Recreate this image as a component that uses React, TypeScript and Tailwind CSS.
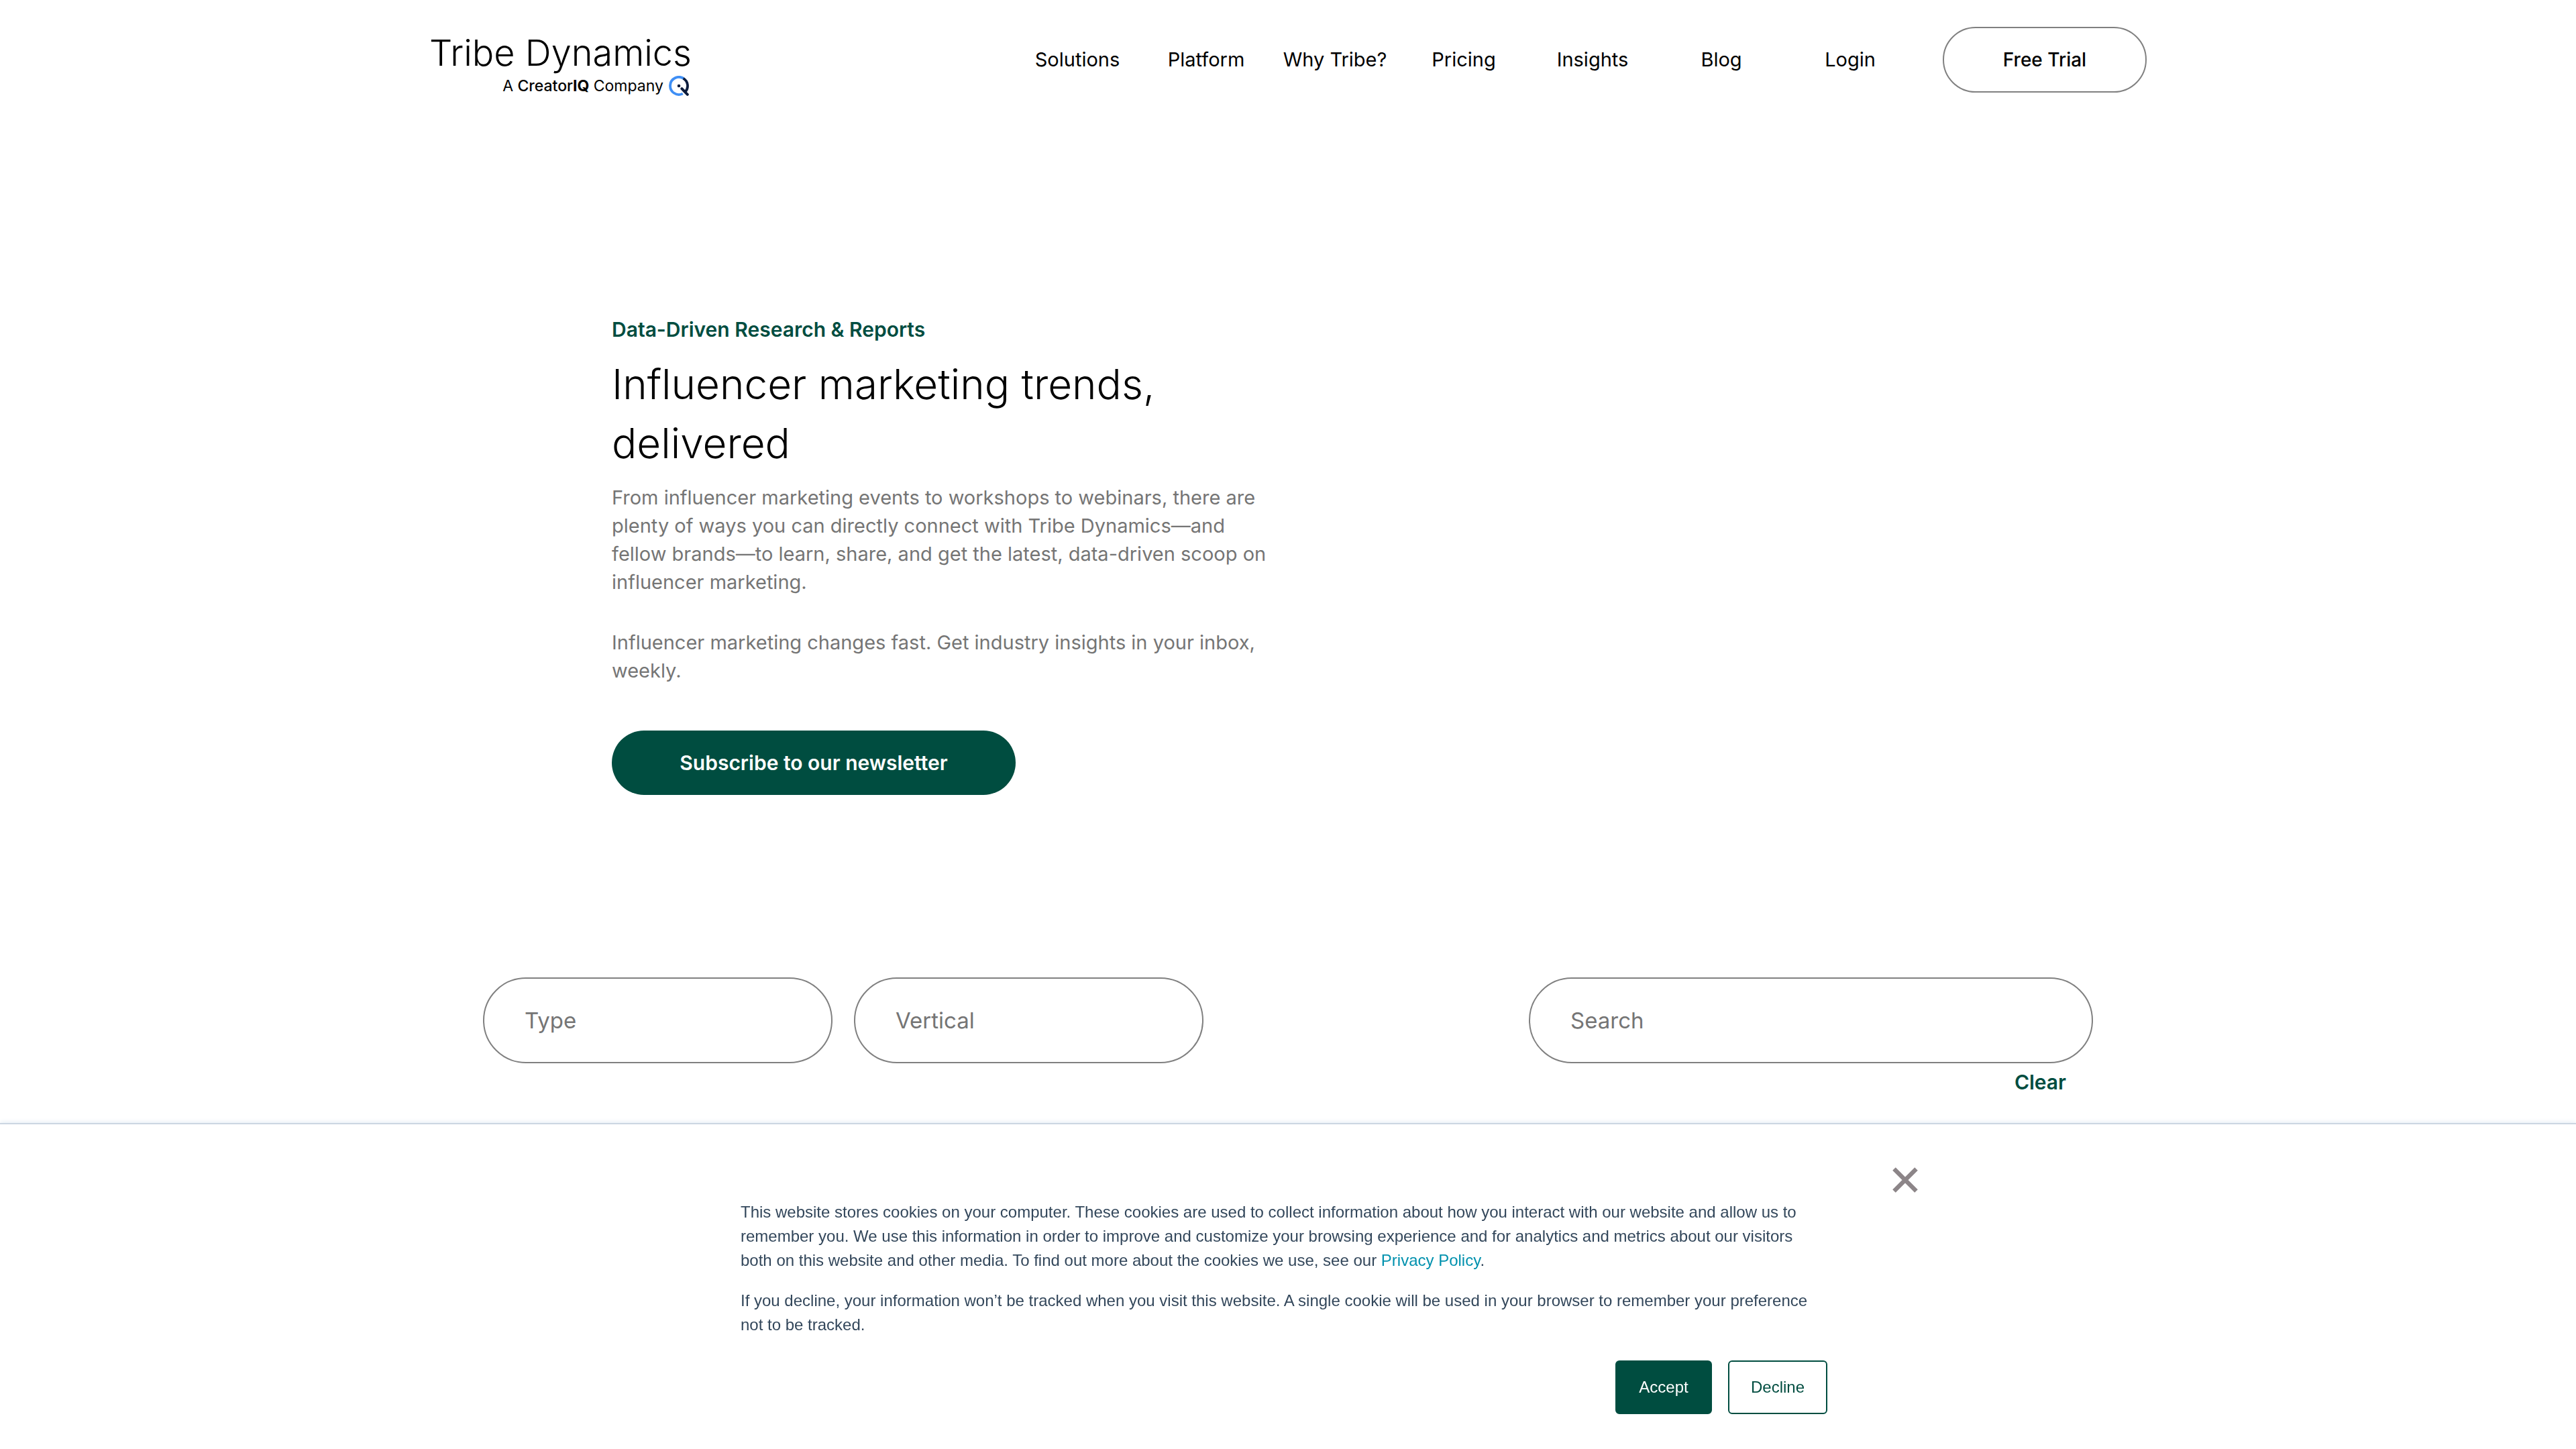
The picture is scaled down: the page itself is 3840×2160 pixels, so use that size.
const NAV_LINKS = ["Solutions", "Platform", "Why Tribe?", "Pricing", "Insights", "Blog", "Login"];

function Logo() {
  return (
    <a href="#" className="flex flex-col items-end pt-2 text-black" aria-label="Tribe Dynamics home">
      <span className="text-[54px] leading-[62px] font-light whitespace-nowrap">Tribe Dynamics</span>
      <span className="flex items-center gap-2 pr-1 text-[23px] leading-[36px] whitespace-nowrap">
        <span>
          A <span className="font-medium">Creator</span>
          <b className="font-bold">IQ</b> Company
        </span>
        <svg viewBox="0 0 30 30" className="size-[30px]" fill="none" aria-hidden="true">
          <path d="M22.2 4.1A13 13 0 1 0 20.8 26.6" stroke="#3f8ff5" strokeWidth="3.8" />
          <path d="M21.6 3.8A13 13 0 0 1 24.4 24" stroke="#0c1c3c" strokeWidth="3.8" />
          <path d="M19.4 19.2L27.8 27.8" stroke="#0c1c3c" strokeWidth="4" strokeLinecap="round" />
          <circle cx="15" cy="15" r="2.3" fill="#0c1c3c" />
        </svg>
      </span>
    </a>
  );
}

function Header() {
  return (
    <header className="mx-auto flex w-full max-w-[2560px] items-start justify-between pt-10">
      <Logo />
      <div className="flex items-center">
        <nav className="flex text-[29px] leading-[40px] text-black">
          {NAV_LINKS.map((label) => (
            <a key={label} href="#" className="w-48 text-center whitespace-nowrap">
              {label}
            </a>
          ))}
        </nav>
        <a
          href="#"
          className="ml-[42px] flex h-[98px] w-[304px] items-center justify-center rounded-full border-2 border-[#808080] text-[28px] leading-[40px] font-medium text-black"
        >
          Free Trial
        </a>
      </div>
    </header>
  );
}

function Hero() {
  return (
    <section className="mx-auto w-full max-w-[2016px] pt-[325px]">
      <div className="max-w-[1000px]">
        <p className="text-[30px] leading-[40px] font-semibold text-[#004d40]">Data-Driven Research &amp; Reports</p>
        <h1 className="mt-[18px] text-[62px] leading-[88px] font-[350] text-black">
          Influencer marketing trends,
          <br />
          delivered
        </h1>
        <div className="mt-4 flex flex-col gap-12 text-[29px] leading-[42px] text-[#757575]">
          <p>
            From influencer marketing events to workshops to webinars, there are
            <br />
            plenty of ways you can directly connect with Tribe Dynamics—and
            <br />
            fellow brands—to learn, share, and get the latest, data-driven scoop on
            <br />
            influencer marketing.
          </p>
          <p>
            Influencer marketing changes fast. Get industry insights in your inbox,
            <br />
            weekly.
          </p>
        </div>
        <button
          type="button"
          className="mt-[68px] h-24 w-[602px] rounded-full bg-[#004d40] text-[30px] leading-[40px] font-semibold text-white"
        >
          Subscribe to our newsletter
        </button>
      </div>
    </section>
  );
}

function Filters() {
  const field =
    "h-32 rounded-full border-2 border-[#808080] bg-white px-[60px] text-[33px] leading-[44px] text-black placeholder:text-[#757575]";
  return (
    <form className="mx-auto mt-[272px] flex w-full max-w-[2400px] items-start justify-between">
      <div className="flex gap-8">
        <input aria-label="Type" placeholder="Type" className={`${field} w-[521px]`} />
        <input aria-label="Vertical" placeholder="Vertical" className={`${field} w-[521px]`} />
      </div>
      <div className="flex w-[841px] flex-col items-end">
        <input aria-label="Search" placeholder="Search" className={`${field} w-full`} />
        <button type="reset" className="mt-2 mr-10 text-[30px] leading-[40px] font-semibold text-[#004d40]">
          Clear
        </button>
      </div>
    </form>
  );
}

function CookieBanner() {
  return (
    <section
      aria-label="Cookie notice"
      className="fixed inset-x-0 bottom-0 border-t-2 border-[#cbd6e2] bg-white pt-16 pb-[52px] font-['Liberation_Sans',Arial,sans-serif] text-2xl leading-[36px] text-[#33475b] shadow-[0_-2px_6px_#eaf0f6]"
    >
      <div className="mx-auto flex max-w-[1878px] justify-end">
        <button type="button" aria-label="Close">
          <svg viewBox="0 0 38 38" className="size-[38px]" fill="none" stroke="#8c8588" strokeWidth="6.4" aria-hidden="true">
            <path d="M2.5 2.5L35.5 35.5M35.5 2.5L2.5 35.5" />
          </svg>
        </button>
      </div>
      <div className="mx-auto mt-[11px] max-w-[1632px]">
        <p>
          This website stores cookies on your computer. These cookies are used to collect information about how you
          interact with our website and allow us to
          <br />
          remember you. We use this information in order to improve and customize your browsing experience and for
          analytics and metrics about our visitors
          <br />
          both on this website and other media. To find out more about the cookies we use, see our{" "}
          <a href="#" className="text-[#0091ae]">
            Privacy Policy
          </a>
          .
        </p>
        <p className="mt-6">
          If you decline, your information won’t be tracked when you visit this website. A single cookie will be used
          in your browser to remember your preference
          <br />
          not to be tracked.
        </p>
        <div className="mt-[35px] mr-3 flex justify-end gap-6">
          <button type="button" className="h-20 w-36 rounded-md border-2 border-[#004d40] bg-[#004d40] text-white">
            Accept
          </button>
          <button type="button" className="h-20 w-[148px] rounded-md border-2 border-[#004d40] bg-white text-[#004d40]">
            Decline
          </button>
        </div>
      </div>
    </section>
  );
}

export default function App() {
  return (
    <div className="min-h-screen bg-white font-['Inter',sans-serif]">
      <Header />
      <main>
        <Hero />
        <Filters />
      </main>
      <CookieBanner />
    </div>
  );
}
